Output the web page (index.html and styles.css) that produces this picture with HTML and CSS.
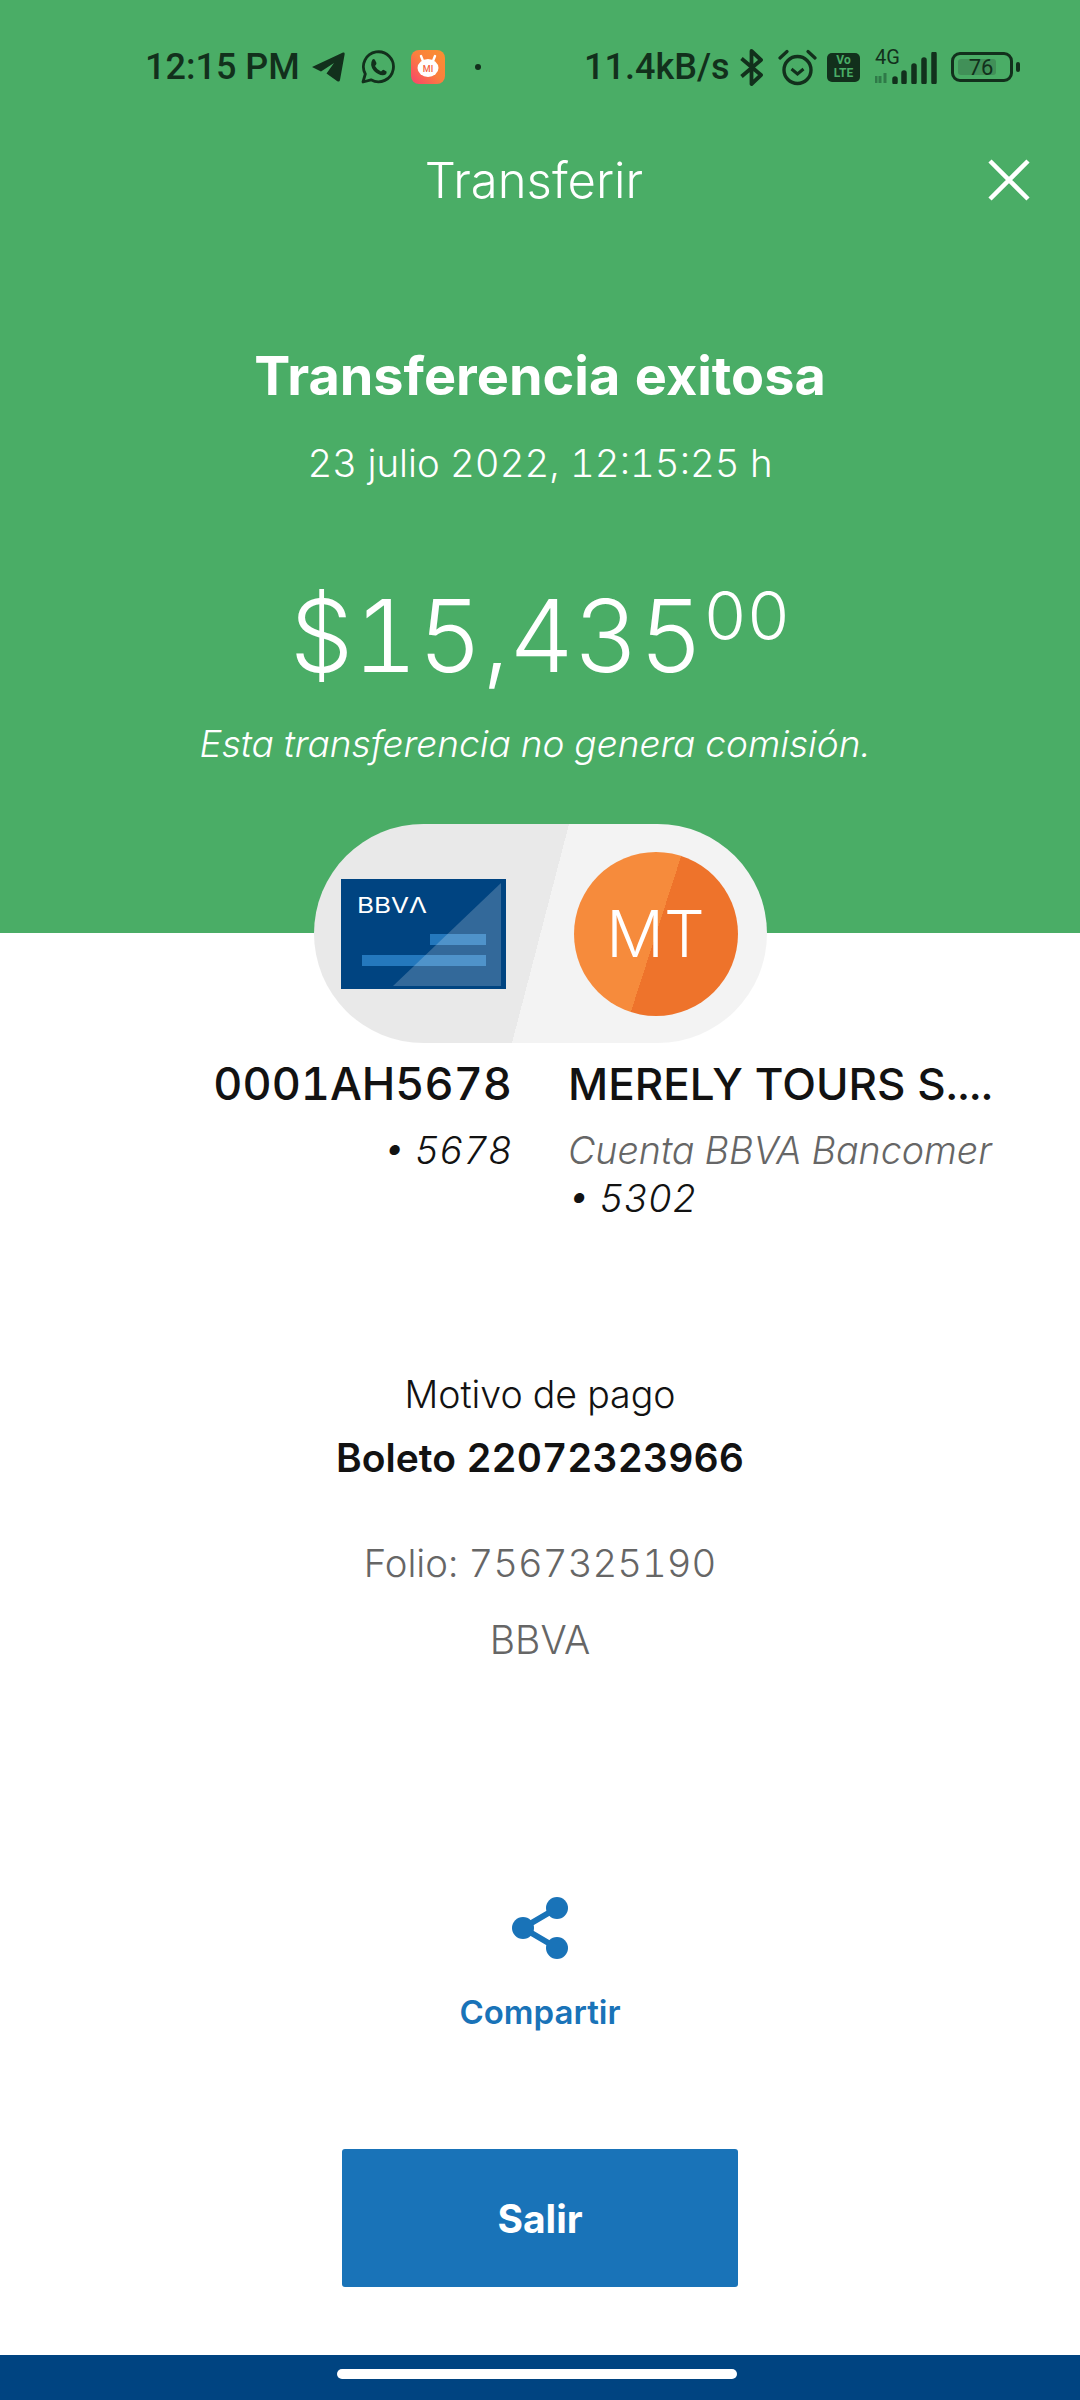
FILE: index.html
```html
<!DOCTYPE html>
<html lang="es">
<head>
    <meta charset="UTF-8">
    <meta name="viewport" content="width=device-width, initial-scale=1.0">
    <title>Transferir</title>
    <link rel="stylesheet" href="styles.css">
</head>
<body>
    <div class="screen">
        <!-- Status bar -->
        <div class="status-bar">
            <span class="clock">12:15 PM</span>
            <svg class="ic-telegram" viewBox="0 0 33 30"><path d="M0 15 L31 0.500 Q33 0 32.600 2.500 L28 28 Q27.400 30.500 25 29 L14.500 21.500 L22 11 L9 19.500 Z" fill="#12301c"/></svg>
            <svg class="ic-whatsapp" viewBox="0 0 34 34"><path d="M2 32 L4.300 24 A15 15 0 1 1 10 29.800 Z" fill="none" stroke="#12301c" stroke-width="2.800" stroke-linejoin="round"/><path d="M11.500 9.500 Q13 8.500 14 10 L15.500 13 Q15.500 14.500 14 16 Q16 20 20 21.500 Q21.500 20 22.500 19.800 L25.500 21.500 Q26 24 23.500 25 Q18 26 13 21 Q8 15 11.500 9.500 Z" fill="#12301c"/></svg>
            <svg class="ic-mi" viewBox="0 0 34 34">
                <defs><linearGradient id="miGrad" x1="0" y1="1" x2="1" y2="0"><stop offset="0" stop-color="#f9406e"/><stop offset="0.5" stop-color="#fb7f3e"/><stop offset="1" stop-color="#f99130"/></linearGradient></defs>
                <rect width="34" height="34" rx="8" fill="url(#miGrad)"/>
                <path d="M10 6 L12 11 M24 6 L22 11" stroke="#fff" stroke-width="2.400" stroke-linecap="round"/>
                <ellipse cx="17" cy="18" rx="10.500" ry="9" fill="#fff"/>
                <text x="17" y="22" class="mi-text">MI</text>
            </svg>
            <span class="dot"></span>
            <span class="speed">11.4kB/s</span>
            <svg class="ic-bt" viewBox="0 0 23 37"><path d="M1.500 9.500 L21 26 L11.500 35 V2 L21 11 L1.500 27.500" fill="none" stroke="#12301c" stroke-width="3.800" stroke-linejoin="round"/></svg>
            <svg class="ic-alarm" viewBox="0 0 39 37"><circle cx="19.500" cy="21" r="13.500" fill="none" stroke="#12301c" stroke-width="3.400"/><path d="M13.500 20 L19.500 25 L25.500 20" fill="none" stroke="#12301c" stroke-width="3"/><path d="M2 9 L9 2.500 M37 9 L30 2.500" stroke="#12301c" stroke-width="3.200" stroke-linecap="round"/></svg>
            <div class="volte"><span>Vo</span><span>LTE</span></div>
            <div class="signal">
                <span class="net">4G</span>
                <svg viewBox="0 0 62 32"><path d="M1 31 V24 M5 31 V24 M10 31 V21" stroke="#2f7a48" stroke-width="3"/><path d="M20 30 V27 M29 30 V21 M39 30 V14 M49 30 V8 M59 30 V2" stroke="#12301c" stroke-width="5.500" stroke-linecap="round"/></svg>
            </div>
            <div class="battery"><div class="battery-box"><span class="battery-level"></span><span class="battery-num">76</span></div><span class="battery-tip"></span></div>
        </div>

        <!-- Title bar -->
        <div class="title-bar">
            <h1>Transferir</h1>
            <svg class="close" viewBox="0 0 42 42"><path d="M2 2 L40 40 M40 2 L2 40" stroke="#fff" stroke-width="4.500"/></svg>
        </div>

        <div class="summary">
            <h2>Transferencia exitosa</h2>
            <p class="date">23 julio 2022, 12:15:25 h</p>
            <p class="amount">$15,435<sup>00</sup></p>
            <p class="fee">Esta transferencia no genera comisión.</p>
        </div>

        <!-- Origin / destination pill -->
        <div class="pill">
            <svg class="card" viewBox="0 0 165 110">
                <rect width="165" height="110" fill="#004481"/>
                <rect x="89" y="55" width="56" height="11" fill="#2478bd"/>
                <rect x="21" y="76" width="124" height="11" fill="#2478bd"/>
                <path d="M52 107 L160 4 V107 Z" fill="#fff" fill-opacity="0.2"/>
                <text x="16" y="34" class="card-logo" textLength="70" lengthAdjust="spacingAndGlyphs">BBVΛ</text>
            </svg>
            <div class="avatar">MT</div>
        </div>

        <div class="accounts">
            <div class="account from">
                <div class="acc-name">0001AH5678</div>
                <div class="acc-num">• 5678</div>
            </div>
            <div class="account">
                <div class="acc-name">MERELY TOURS S....</div>
                <div class="acc-bank">Cuenta BBVA Bancomer</div>
                <div class="acc-num">• 5302</div>
            </div>
        </div>

        <div class="details">
            <p class="reason-label">Motivo de pago</p>
            <p class="reason">Boleto 22072323966</p>
            <p class="folio">Folio: 7567325190</p>
            <p class="bank">BBVA</p>
        </div>

        <div class="share">
            <svg viewBox="0 0 56 62"><path d="M45 11 L11 31 L45 51" fill="none" stroke="#1973b8" stroke-width="6"/><circle cx="45" cy="11" r="11" fill="#1973b8"/><circle cx="11" cy="31" r="11" fill="#1973b8"/><circle cx="45" cy="51" r="11" fill="#1973b8"/></svg>
            <span>Compartir</span>
        </div>

        <button class="exit">Salir</button>

        <div class="nav-bar"><span class="home"></span></div>
    </div>
</body>
</html>
```

FILE: styles.css
```css
* {
    box-sizing: border-box;
}

body {
    margin: 0;
    font-family: Inter, sans-serif;
    font-variant-numeric: tabular-nums;
    background-color: #fff;
}

p, h1, h2 {
    margin: 0;
    font-weight: normal;
}

.screen {
    width: 1080px;
    height: 2400px;
    display: flex;
    flex-direction: column;
    align-items: center;
    background: linear-gradient(#4aad66 933px, #fff 933px);
    overflow: hidden;
}

/* status bar */
.status-bar {
    width: 100%;
    height: 48px;
    margin-top: 43px;
    padding-left: 145px;
    display: flex;
    align-items: center;
    color: #12301c;
    font-family: Roboto, sans-serif;
    font-size: 36px;
    font-weight: 500;
    font-variant-numeric: normal;
}

.clock {
    width: 167px;
    flex: none;
}

.ic-telegram {
    width: 33px;
    height: 30px;
}

.ic-whatsapp {
    width: 34px;
    height: 34px;
    margin-left: 16px;
}

.ic-mi {
    width: 34px;
    height: 34px;
    margin-left: 16px;
}

.mi-text {
    font-size: 9px;
    fill: #f4663f;
    text-anchor: middle;
}

.dot {
    width: 6px;
    height: 6px;
    margin-left: 30px;
    border-radius: 50%;
    background-color: #12301c;
}

.speed {
    width: 156px;
    margin-left: 103px;
    flex: none;
}

.ic-bt {
    width: 23px;
    height: 37px;
}

.ic-alarm {
    width: 39px;
    height: 37px;
    margin-left: 15px;
}

.volte {
    width: 33px;
    height: 29px;
    margin-left: 10px;
    border-radius: 5px;
    background-color: #12301c;
    color: #4aad66;
    font-size: 12px;
    font-weight: bold;
    line-height: 13px;
    display: flex;
    flex-direction: column;
    align-items: center;
    justify-content: center;
}

.signal {
    width: 62px;
    height: 34px;
    margin-left: 15px;
    display: flex;
    flex-direction: column;
    font-size: 20px;
    font-weight: 400;
    line-height: 15px;
}

.signal .net {
    height: 0;
    overflow: visible;
}

.signal svg {
    width: 62px;
    height: 32px;
    margin-top: 2px;
}

.battery {
    margin-left: 14px;
    display: flex;
    align-items: center;
}

.battery-box {
    width: 62px;
    height: 30px;
    padding: 4px;
    border: 3px solid #12301c;
    border-radius: 9px;
    display: flex;
}

.battery-level {
    width: 38px;
    background-color: #419058;
    border-radius: 3px;
}

.battery-num {
    width: 38px;
    margin-left: -38px;
    font-size: 22px;
    font-weight: 400;
    line-height: 18px;
    text-align: center;
    padding-left: 8px;
}

.battery-tip {
    width: 4px;
    height: 10px;
    margin-left: 3px;
    border-radius: 2px;
    background-color: #12301c;
}

/* title bar */
.title-bar {
    width: 100%;
    height: 60px;
    margin-top: 59px;
    padding-right: 50px;
    display: flex;
    align-items: center;
    color: #fff;
}

.title-bar h1 {
    flex: 1;
    padding-left: 80px;
    font-size: 49px;
    font-weight: 300;
    text-align: center;
}

.close {
    width: 42px;
    height: 42px;
}

/* summary */
.summary {
    width: 100%;
    text-align: center;
    color: #fff;
}

.summary h2 {
    margin-top: 134px;
    font-size: 54px;
    font-weight: 700;
    line-height: 64px;
}

.date {
    margin-top: 30px;
    font-size: 38.400px;
    font-weight: 300;
    line-height: 50px;
}

.amount {
    margin-top: 88px;
    font-size: 100px;
    font-weight: 300;
    line-height: 120px;
}

.amount sup {
    font-size: 67px;
    line-height: 0;
    vertical-align: 32px;
}

.fee {
    margin-top: 23px;
    padding-right: 10px;
    font-size: 37px;
    font-style: italic;
    font-weight: 300;
    line-height: 50px;
}

/* pill */
.pill {
    width: 453px;
    height: 219px;
    margin-top: 55px;
    padding: 0 29px 0 27px;
    border-radius: 110px;
    background: linear-gradient(104.600deg, #e9e9e9 50%, #f3f3f3 50%);
    display: flex;
    align-items: center;
    justify-content: space-between;
}

.card {
    width: 165px;
    height: 110px;
}

.card-logo {
    font-family: Inter, sans-serif;
    font-size: 22px;
    fill: #fff;
}

.avatar {
    width: 164px;
    height: 164px;
    border-radius: 50%;
    background: linear-gradient(107.900deg, #f68b3c 50%, #ee732b 50%);
    color: #fff;
    font-size: 64px;
    font-weight: 300;
    line-height: 164px;
    text-align: center;
}

/* accounts */
.accounts {
    width: 100%;
    margin-top: 12px;
    display: flex;
    gap: 56px;
}

.account {
    flex: 1;
    min-width: 0;
    font-size: 37.600px;
    line-height: 48px;
    white-space: nowrap;
}

.account.from {
    flex: none;
    width: 512px;
    text-align: right;
}

.acc-name {
    height: 58px;
    margin-bottom: 14px;
    color: #121212;
    font-size: 44px;
    font-weight: 500;
    line-height: 58px;
}

.from .acc-name {
    font-size: 45px;
}

.acc-bank {
    color: #666;
    font-style: italic;
    font-weight: 300;
}

.acc-num {
    color: #121212;
    font-style: italic;
    font-weight: 300;
}

/* details */
.details {
    width: 100%;
    text-align: center;
}

.reason-label {
    margin-top: 147px;
    color: #121212;
    font-size: 37.500px;
    font-weight: 300;
    line-height: 50px;
}

.reason {
    margin-top: 13px;
    color: #121212;
    font-size: 39px;
    font-weight: 600;
    line-height: 50px;
}

.folio {
    margin-top: 55px;
    color: #666;
    font-size: 38.300px;
    font-weight: 300;
    line-height: 50px;
}

.bank {
    margin-top: 27px;
    color: #666;
    font-size: 39px;
    font-weight: 300;
    line-height: 50px;
}

/* share */
.share {
    margin-top: 232px;
    display: flex;
    flex-direction: column;
    align-items: center;
    color: #1973b8;
    font-size: 33px;
    font-weight: 600;
}

.share svg {
    width: 56px;
    height: 62px;
}

.share span {
    margin-top: 31px;
    line-height: 44px;
}

.exit {
    width: 396px;
    height: 138px;
    margin-top: 115px;
    border: none;
    border-radius: 3px;
    background-color: #1973b8;
    color: #fff;
    font-family: Inter, sans-serif;
    font-size: 39px;
    font-weight: 700;
}

.nav-bar {
    width: 100%;
    height: 45px;
    margin-top: auto;
    padding-top: 14px;
    padding-right: 6px;
    background-color: #004481;
    display: flex;
    justify-content: center;
}

.home {
    width: 400px;
    height: 10px;
    border-radius: 5px;
    background-color: #fff;
}
```
